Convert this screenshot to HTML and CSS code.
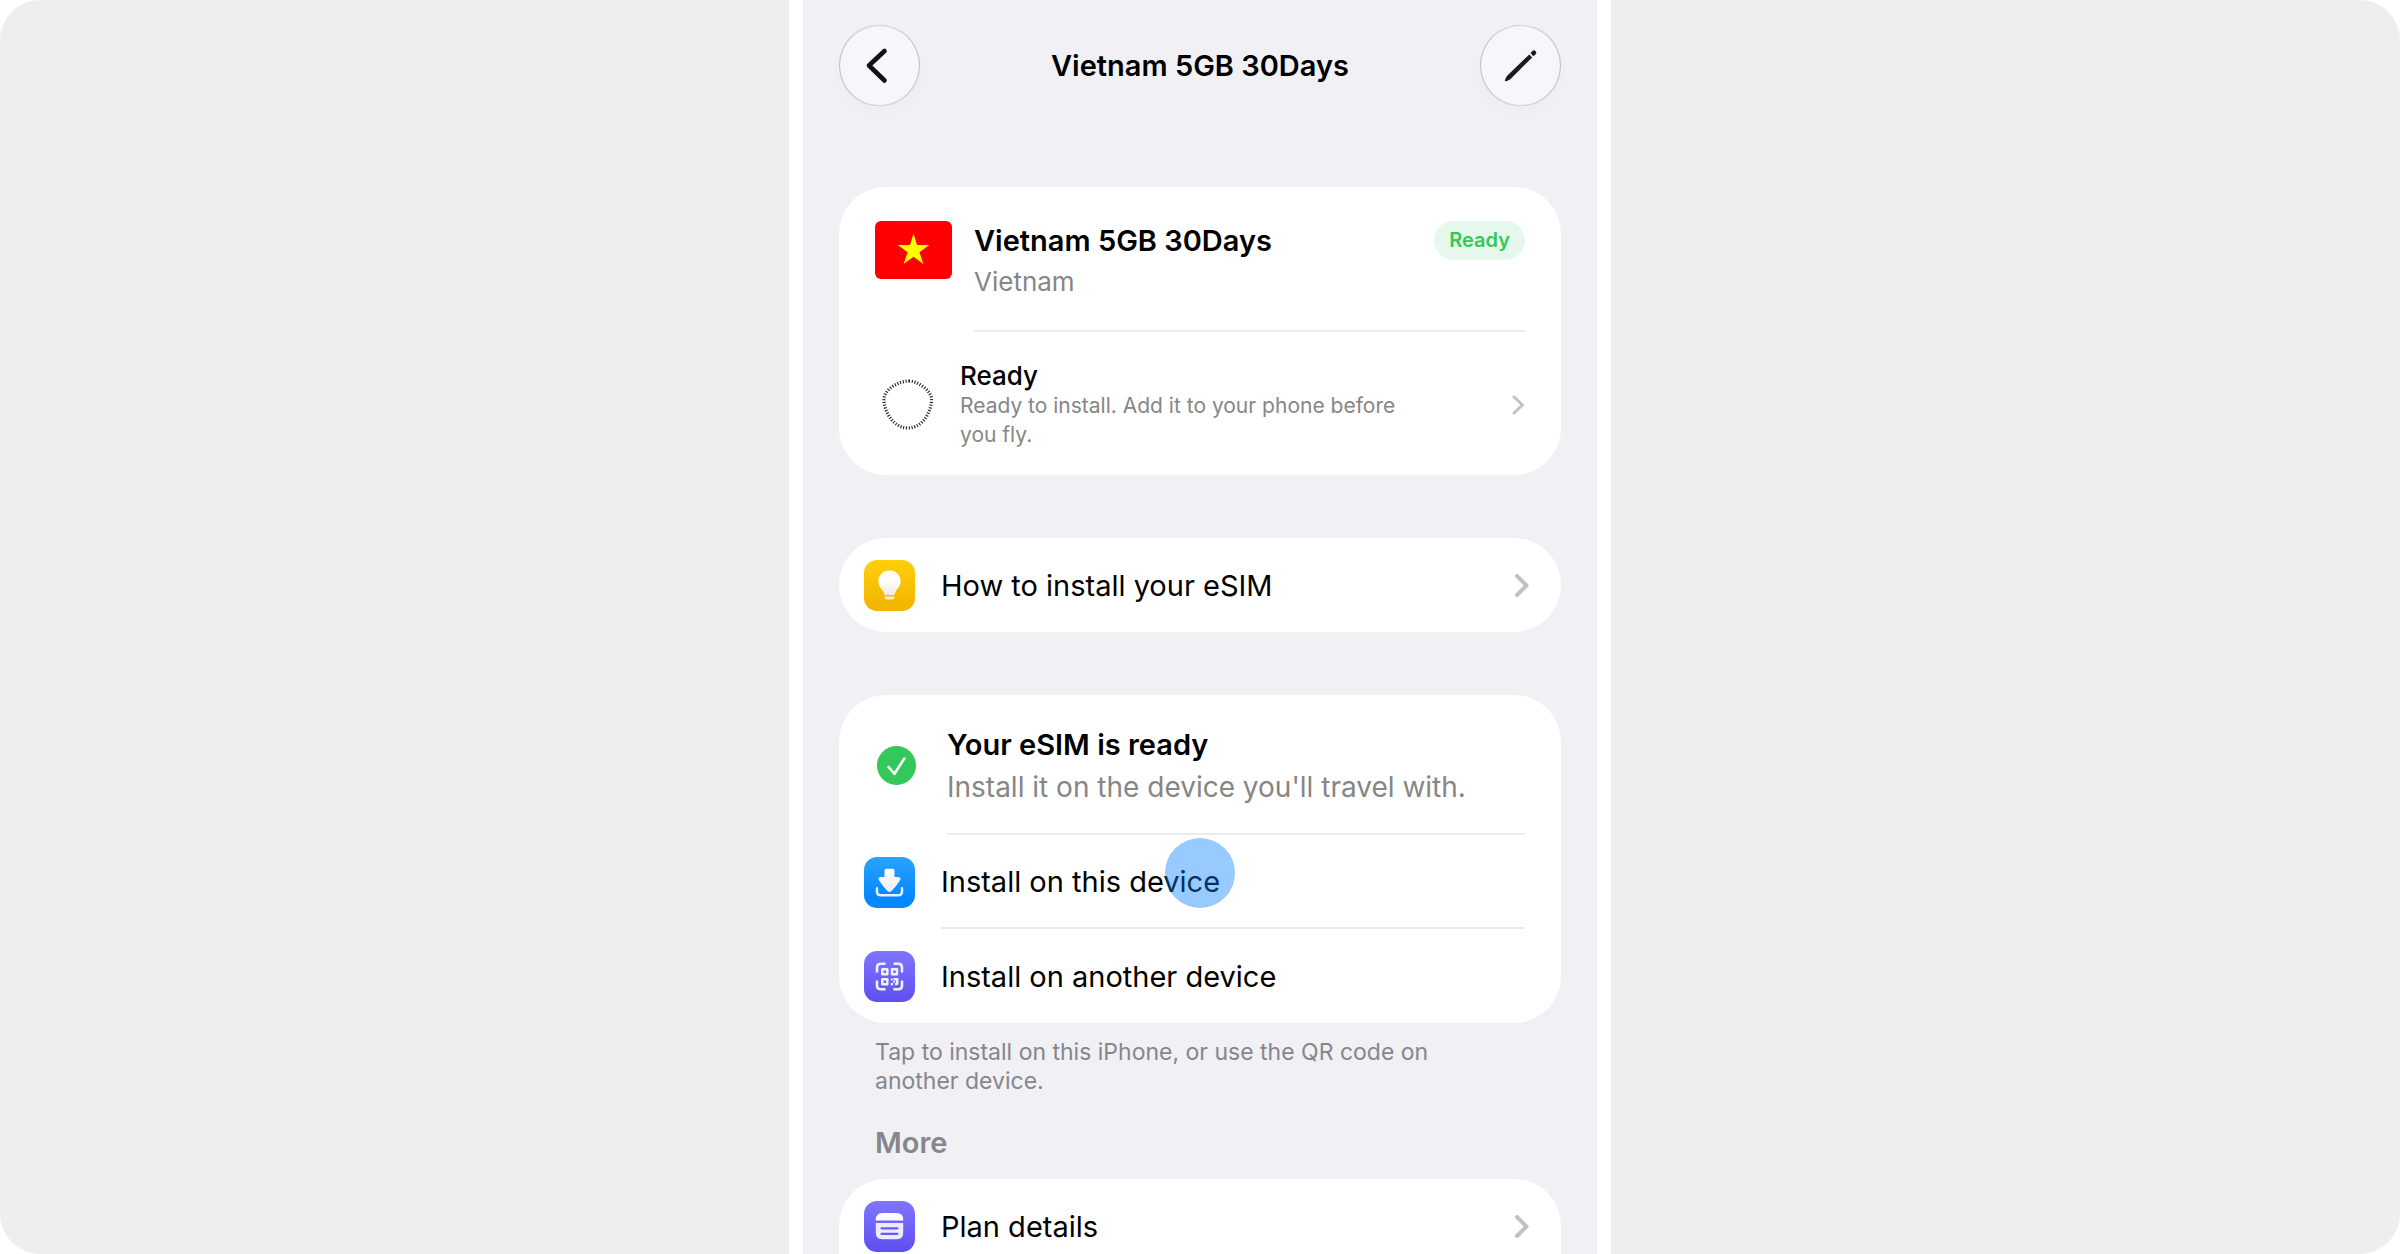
FILE: index.html
```html
<!DOCTYPE html>
<html lang="en">
<head>
    <meta charset="UTF-8">
    <meta name="viewport" content="width=device-width, initial-scale=1.0">
    <title>Vietnam 5GB 30Days</title>
    <link rel="stylesheet" href="styles.css">
</head>
<body>
    <div class="stage">
        <main class="phone">
            <header class="top-bar">
                <button class="round-btn" type="button" aria-label="Back">
                    <svg width="81" height="81" viewBox="0 0 81 81" fill="none" stroke="#111114" stroke-width="4.6" stroke-linecap="round" stroke-linejoin="round">
                        <path d="M45.5 26 L30 40.5 L45.5 55.5"/>
                    </svg>
                </button>
                <h1 class="title">Vietnam 5GB 30Days</h1>
                <button class="round-btn" type="button" aria-label="Edit">
                    <svg width="81" height="81" viewBox="0 0 81 81" fill="#1b1b1f">
                        <path d="M49.2 29.4 L52.2 32.4 L30.6 54 Q29.6 55 26.2 56.2 Q24.6 56.6 25 55 Q26.2 51.8 27.4 50.6 Z"/>
                        <path d="M50.5 28.3 L52.3 25.9 Q53.8 24.4 55.5 25.9 Q57.2 27.6 55.8 29.1 L53.4 31.2 Z"/>
                    </svg>
                </button>
            </header>

            <section class="card">
                <div class="row row-plan">
                    <svg class="flag" width="77" height="58" viewBox="0 0 77 58" role="img" aria-label="Flag of Vietnam">
                        <rect width="77" height="58" rx="6" fill="#f00"/>
                        <path fill="#ff0" d="M38.5 12.5 L42 23.9 H54.3 L44.4 31.2 L48.4 43 L38.5 35.8 L28.6 43 L32.6 31.2 L22.7 23.9 H35 Z"/>
                    </svg>
                    <div class="row-body divided plan-body">
                        <div class="row-text">
                            <h2 class="title">Vietnam 5GB 30Days</h2>
                            <p class="country">Vietnam</p>
                        </div>
                        <span class="badge">Ready</span>
                    </div>
                </div>
                <a class="row row-status" href="#">
                    <span class="status-icon">
                        <svg width="51" height="51" viewBox="0 0 51 51" fill="none" stroke="#222" stroke-width="3.2" stroke-dasharray="1.1 1.7">
                            <path d="M27 2 C35 2 49 11 49.5 20 C50 30 42 49 26 49 C10 49 1.5 30 2 20 C2.5 10 17 2 27 2 Z"/>
                        </svg>
                    </span>
                    <span class="status-text">
                        <span class="status-name">Ready</span>
                        <span class="status-note">Ready to install. Add it to your phone before you fly.</span>
                    </span>
                    <svg class="chevron" width="13" height="20" viewBox="0 0 13 20"><path d="M2 2 L10.5 10 L2 18"/></svg>
                </a>
            </section>

            <section class="card">
                <a class="row row-link" href="#">
                    <svg class="tile" width="51" height="51" viewBox="0 0 51 51">
                        <defs>
                            <linearGradient id="yellow" x2="0" y2="1"><stop stop-color="#ffcf08"/><stop offset="1" stop-color="#f0b400"/></linearGradient>
                            <linearGradient id="glyph" x2="0" y2="1"><stop offset="0.4" stop-color="#fff"/><stop offset="1" stop-color="#f0e9dc"/></linearGradient>
                        </defs>
                        <rect width="51" height="51" rx="13" fill="url(#yellow)"/>
                        <path fill="url(#glyph)" d="M25.5 10.5 C18.8 10.5 14.3 15.3 14.3 21.2 C14.3 25.2 16.3 27.3 18 29.6 C19.4 31.6 19.7 32.5 20.3 34.2 Q20.7 35 21.5 35 H29.5 Q30.3 35 30.7 34.2 C31.3 32.5 31.6 31.6 33 29.6 C34.7 27.3 36.7 25.2 36.7 21.2 C36.7 15.3 32.2 10.5 25.5 10.5 Z"/>
                        <path fill="#fbeecb" d="M21 36.4 H30 Q30.8 36.4 30.5 37.6 Q30.1 39.4 28.8 39.4 H22.2 Q20.9 39.4 20.5 37.6 Q20.2 36.4 21 36.4 Z"/>
                    </svg>
                    <span class="row-body">How to install your eSIM</span>
                    <svg class="chevron chevron-lg" width="14" height="23" viewBox="0 0 14 23"><path d="M2 2 L11.5 11.5 L2 21"/></svg>
                </a>
            </section>

            <section class="card">
                <div class="row row-ready">
                    <svg width="39" height="39" viewBox="0 0 39 39">
                        <circle cx="19.5" cy="19.5" r="19.5" fill="#34c759"/>
                        <path d="M11.5 21 L17.5 27.8 L27.3 12.5" fill="none" stroke="#fff" stroke-width="2.6" stroke-linecap="round" stroke-linejoin="round"/>
                    </svg>
                    <div class="row-body divided ready-body">
                        <div class="row-text">
                            <h2 class="title">Your eSIM is ready</h2>
                            <p class="ready-note">Install it on the device you'll travel with.</p>
                        </div>
                    </div>
                </div>
                <button class="row row-action" type="button">
                    <svg class="tile" width="51" height="51" viewBox="0 0 51 51">
                        <defs>
                            <linearGradient id="blue" x2="0" y2="1"><stop stop-color="#2aa3ff"/><stop offset="0.8" stop-color="#0587ff"/></linearGradient>
                            <linearGradient id="arrow" x2="0" y2="1"><stop stop-color="#fff"/><stop offset="1" stop-color="#e9eef6"/></linearGradient>
                        </defs>
                        <rect width="51" height="51" rx="13" fill="url(#blue)"/>
                        <path fill="url(#arrow)" d="M22.5 11.8 H28.5 Q30.5 11.8 30.5 13.8 V20 H34.5 Q37.5 20.5 36 23.3 Q32.5 29 27.6 34 Q25.5 36 23.4 34 Q18.5 29 15 23.3 Q13.5 20.5 16.5 20 H20.5 V13.8 Q20.5 11.8 22.5 11.8 Z"/>
                        <path d="M13 31.3 V34.8 Q13 38.2 16.4 38.2 H34.6 Q38 38.2 38 34.8 V31.3" fill="none" stroke="#e4f0ff" stroke-width="2.4" stroke-linecap="round"/>
                    </svg>
                    <span class="row-body divided">Install on this device</span>
                    <span class="tap-dot"></span>
                </button>
                <button class="row row-action" type="button">
                    <svg class="tile" width="51" height="51" viewBox="0 0 51 51">
                        <defs>
                            <linearGradient id="purple" x2="0" y2="1"><stop stop-color="#8075ff"/><stop offset="1" stop-color="#5f4ff0"/></linearGradient>
                        </defs>
                        <rect width="51" height="51" rx="13" fill="url(#purple)"/>
                        <g fill="none" stroke="#f0effd" stroke-width="2.6" stroke-linecap="round">
                            <path d="M13 20.5 V16.5 Q13 12.7 16.8 12.7 H20.5 M30.5 12.7 H34.2 Q38 12.7 38 16.5 V20.5 M13 30.5 V34.5 Q13 38.3 16.8 38.3 H20.5 M30.5 38.3 H34.2 Q38 38.3 38 34.5 V30.5"/>
                        </g>
                        <g fill="none" stroke="#f0effd" stroke-width="2.5" stroke-linejoin="round">
                            <path d="M18.3 18.2 H23.3 V23.2 H18.3 Z M28 18.2 H33 V23.2 H28 Z M18.3 28.2 H23.3 V33.2 H18.3 Z"/>
                        </g>
                        <path fill="#f0effd" d="M29.5 27 H33.5 Q34.5 27 34.5 28 V32.5 Q34.5 34.2 32.8 34.2 H31 V31.8 H32 V29.5 H29.5 Z M26.8 27.4 H28.6 V29.6 H26.8 Z M29.2 30 H31 V31.8 H29.2 Z M26.8 32 H29.2 V34.2 H26.8 Z"/>
                    </svg>
                    <span class="row-body">Install on another device</span>
                </button>
            </section>
            <p class="footnote">Tap to install on this iPhone, or use the QR code on another device.</p>

            <h2 class="title section-title">More</h2>
            <section class="card">
                <a class="row row-link" href="#">
                    <svg class="tile" width="51" height="51" viewBox="0 0 51 51">
                        <rect width="51" height="51" rx="13" fill="url(#purple)"/>
                        <path fill="#fff" d="M11.8 19.5 V18.5 Q11.8 12 18.3 12 H32.7 Q39.2 12 39.2 18.5 V19.5 Z"/>
                        <path fill="#edebfd" d="M11.8 22 H39.2 V31.7 Q39.2 38.2 32.7 38.2 H18.3 Q11.8 38.2 11.8 31.7 Z"/>
                        <path d="M17.5 27.3 H33.5 M17.5 32.8 H33.5" stroke="#6a5cf5" stroke-width="2.2" stroke-linecap="round"/>
                    </svg>
                    <span class="row-body">Plan details</span>
                    <svg class="chevron chevron-lg" width="14" height="23" viewBox="0 0 14 23"><path d="M2 2 L11.5 11.5 L2 21"/></svg>
                </a>
                <div class="row"></div>
            </section>
        </main>
    </div>
</body>
</html>
```
FILE: styles.css
```css
* {
    box-sizing: border-box;
}

body {
    margin: 0;
    background: #fff;
    font-family: Inter, "Liberation Sans", sans-serif;
    color: #000;
}

h1, h2, p {
    margin: 0;
}

.stage {
    display: flex;
    justify-content: center;
    height: 100vh;
    overflow: hidden;
    background: #eee;
    border-radius: 40px;
}

.phone {
    width: 100%;
    max-width: 822px;
    padding: 25px 36px 0;
    background: #f0f0f5;
    border: solid #fff;
    border-width: 0 14px;
}

/* Top bar */
.top-bar {
    display: flex;
    align-items: center;
    justify-content: space-between;
    margin-bottom: 81px;
}

.round-btn {
    width: 81px;
    height: 81px;
    padding: 0;
    border: 0;
    border-radius: 50%;
    background: #f7f7fb;
    box-shadow: inset 1px 0 0 #c4c4c8, inset -1px 0 0 #c4c4c8, inset 0 0 0 1px #d8d8dc, 0 6px 14px rgba(0, 0, 0, 0.02);
}

.round-btn svg {
    display: block;
}

.title {
    font-size: 29px;
    font-weight: 600;
    line-height: 39px;
}

/* Cards */
.card {
    margin-bottom: 63px;
    background: #fff;
    border-radius: 47px;
    overflow: hidden;
}

.row {
    display: flex;
    align-items: center;
    width: 100%;
    min-height: 94px;
    border: 0;
    background: none;
    color: inherit;
    font-family: inherit;
    font-size: 29px;
    text-align: left;
    text-decoration: none;
}

.row-body {
    flex: 1;
    display: flex;
    align-items: center;
    align-self: stretch;
}

.divided {
    border-bottom: 2px solid #ebebeb;
}

.row-text {
    flex: 1;
}

.row-plan {
    gap: 22px;
    padding: 0 36px;
}

.flag {
    align-self: flex-start;
    margin-top: 34px;
}

.plan-body {
    align-items: flex-start;
    padding: 34px 0 30px;
}

.country {
    margin-top: 4px;
    color: #868686;
    font-size: 26px;
    line-height: 36px;
}

.badge {
    padding: 0 15px;
    border-radius: 20px;
    background: #e6f8eb;
    color: #34c759;
    font-size: 20px;
    font-weight: 600;
    line-height: 39px;
}

.row-status {
    gap: 20px;
    padding: 28px 36px 26px;
}

.status-icon {
    display: flex;
    justify-content: center;
    width: 65px;
}

.status-text {
    flex: 1;
    padding-right: 60px;
}

.status-name,
.status-note {
    display: block;
}

.status-name {
    font-size: 26px;
    font-weight: 500;
    line-height: 31px;
}

.status-note {
    color: #868686;
    font-size: 21px;
    line-height: 29px;
}

.chevron {
    fill: none;
    stroke: #c2c2c4;
    stroke-width: 3;
    stroke-linecap: round;
    stroke-linejoin: round;
}

.chevron-lg {
    stroke-width: 4;
}

.row-link {
    gap: 26px;
    padding: 0 32px 0 25px;
}

.row-ready {
    gap: 31px;
    padding: 0 36px 0 38px;
}

.ready-body {
    padding: 30px 0 28px;
}

.ready-note {
    margin-top: 5px;
    color: #868686;
    font-size: 28px;
    line-height: 36px;
}

.row-action {
    position: relative;
    gap: 26px;
    padding: 0 36px 0 25px;
}

.tap-dot {
    position: absolute;
    top: 3px;
    left: 50%;
    width: 70px;
    height: 70px;
    margin-left: -35px;
    border-radius: 50%;
    background: rgba(0, 122, 255, 0.4);
}

.footnote {
    margin-top: -48px;
    padding: 0 80px 0 36px;
    color: #86868b;
    font-size: 23px;
    line-height: 29px;
}

.section-title {
    margin: 27px 36px 17px;
    color: #86868b;
}
```
